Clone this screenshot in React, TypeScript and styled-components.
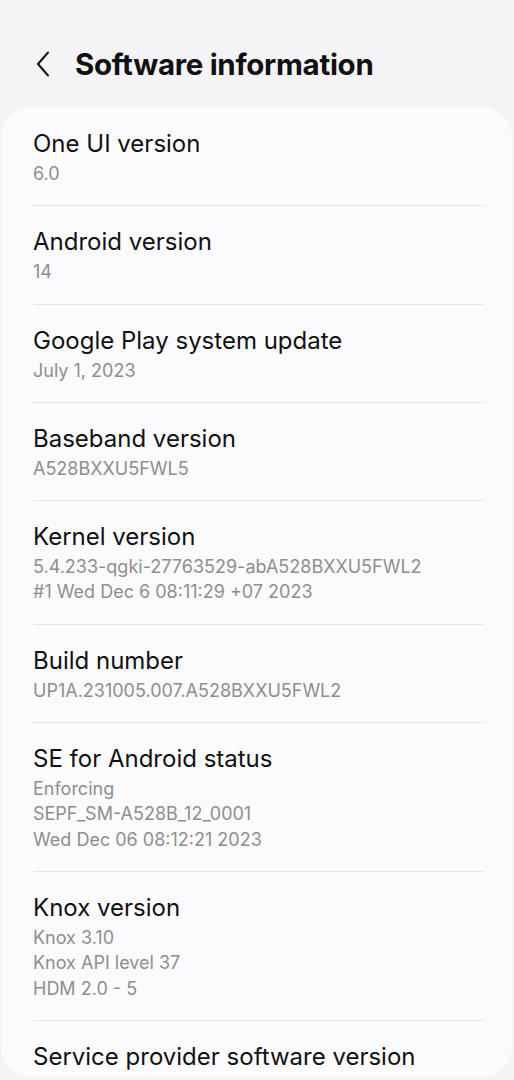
import React from "react";
import styled, { createGlobalStyle } from "styled-components";

const Global = createGlobalStyle`
  html, body { margin: 0; padding: 0; background: #f4f4f6; }
  body { font-family: "Inter", "Noto Sans", sans-serif; -webkit-font-smoothing: antialiased; }
`;

const Screen = styled.div`
  width: 514px;
  height: 1080px;
  overflow: hidden;
  background: #f4f4f6;
  display: flex;
  flex-direction: column;
`;

const Header = styled.header`
  height: 107px;
  flex-shrink: 0;
  display: flex;
  align-items: center;
  padding: 20px 0 0 31px;
  box-sizing: border-box;
  gap: 20px;
`;

const BackButton = styled.button`
  width: 24px;
  height: 30px;
  padding: 0;
  border: 0;
  background: transparent;
  display: flex;
  align-items: center;
  justify-content: center;
  color: #111;
`;

const Title = styled.h1`
  margin: 0;
  font-family: "Inter", sans-serif;
  font-weight: 700;
  font-size: 29.5px;
  letter-spacing: -0.3px;
  color: #111;
`;

const Card = styled.section`
  margin: 0 2px 3px 1px;
  flex: 1;
  min-height: 0;
  background: #fbfbfd;
  border-radius: 30px;
  overflow: hidden;
  padding: 1px 27px 0 32px;
  display: flex;
  flex-direction: column;
`;

const Item = styled.div<{ $last?: boolean }>`
  padding: 21px 0 19px 0;
  border-bottom: ${(p) => (p.$last ? "none" : "1px solid #e6e6e8")};
  display: flex;
  flex-direction: column;
  flex-shrink: 0;
`;

const ItemTitle = styled.div`
  font-size: 24px;
  line-height: 30px;
  color: #111;
  margin-bottom: 2px;
`;

const ItemValue = styled.div`
  font-size: 18px;
  line-height: 25.3px;
  color: #8e8e8e;
`;

const items: { title: string; lines: string[] }[] = [
  { title: "One UI version", lines: ["6.0"] },
  { title: "Android version", lines: ["14"] },
  { title: "Google Play system update", lines: ["July 1, 2023"] },
  { title: "Baseband version", lines: ["A528BXXU5FWL5"] },
  {
    title: "Kernel version",
    lines: ["5.4.233-qgki-27763529-abA528BXXU5FWL2", "#1 Wed Dec 6 08:11:29 +07 2023"],
  },
  { title: "Build number", lines: ["UP1A.231005.007.A528BXXU5FWL2"] },
  {
    title: "SE for Android status",
    lines: ["Enforcing", "SEPF_SM-A528B_12_0001", "Wed Dec 06 08:12:21 2023"],
  },
  { title: "Knox version", lines: ["Knox 3.10", "Knox API level 37", "HDM 2.0 - 5"] },
  { title: "Service provider software version", lines: ["SAOMC_SM-A528B_OXM_XXV_14_0003"] },
];

export default function App() {
  return (
    <>
      <Global />
      <Screen>
        <Header>
          <BackButton aria-label="Back">
            <svg width="14" height="26" viewBox="0 0 14 26" fill="none">
              <path d="M12 1.5 L2 13 L12 24.5" stroke="#111" strokeWidth="2" strokeLinecap="round" strokeLinejoin="round" />
            </svg>
          </BackButton>
          <Title>Software information</Title>
        </Header>
        <Card>
          {items.map((it, i) => (
            <Item key={it.title} $last={i === items.length - 1}>
              <ItemTitle>{it.title}</ItemTitle>
              {it.lines.map((l) => (
                <ItemValue key={l}>{l}</ItemValue>
              ))}
            </Item>
          ))}
        </Card>
      </Screen>
    </>
  );
}
